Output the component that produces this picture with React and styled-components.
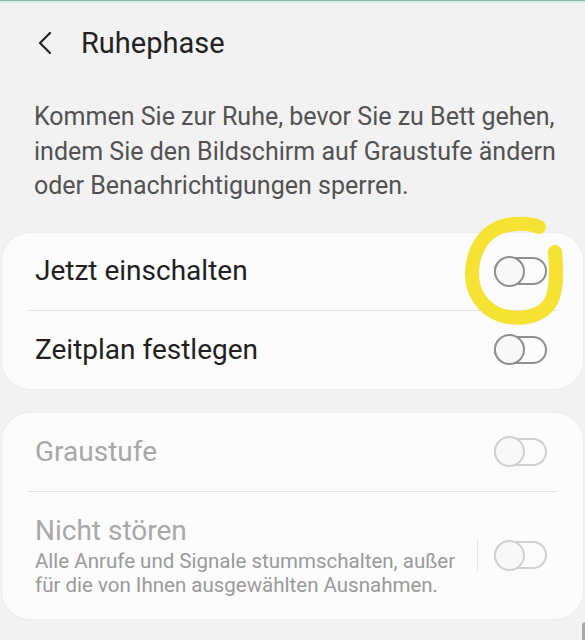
import React from 'react'
import styled, { createGlobalStyle } from 'styled-components'

const GlobalStyle = createGlobalStyle`
  html, body {
    margin: 0;
    padding: 0;
    background: #f2f2f2;
    font-family: Roboto, "Noto Sans", sans-serif;
  }
`

const Page = styled.div`
  position: relative;
  width: 585px;
  height: 640px;
  overflow: hidden;
  background: #f2f2f2;
  border-top: 1px solid #86bda4;
  box-sizing: border-box;
`

const TopGlow = styled.div`
  height: 2px;
  background: #d4efe3;
`

const Header = styled.header`
  display: flex;
  align-items: center;
  height: 80px;
  padding-left: 36px;
  box-sizing: border-box;
`

const BackButton = styled.button`
  display: flex;
  align-items: center;
  justify-content: center;
  width: 18px;
  height: 26px;
  padding: 0;
  margin-right: 27px;
  border: none;
  background: none;
`

const Title = styled.h1`
  margin: 0;
  font-size: 29px;
  font-weight: 400;
  color: #222;
`

const Description = styled.p`
  margin: 17px 0 0;
  padding: 0 28px 0 34px;
  font-size: 25px;
  line-height: 34.5px;
  color: #525252;
`

const Card = styled.section`
  margin: ${p => p.$top}px 2px 0;
  background: #fcfcfc;
  border-radius: 28px;
  box-shadow: 0 0 0 1px #ececec;
`

const Row = styled.div`
  display: flex;
  align-items: center;
  min-height: ${p => p.$height || 77}px;
  padding: 0 36px 0 33px;
  box-sizing: border-box;
`

const Divider = styled.div`
  height: 1px;
  margin: 0 26px;
  background: #e2e2e2;
`

const Texts = styled.div`
  flex: 1;
  display: flex;
  flex-direction: column;
`

const Label = styled.span`
  font-size: 28px;
  line-height: 34px;
  color: ${p => (p.$disabled ? '#a8a8a8' : '#1f1f1f')};
`

const Sub = styled.span`
  margin-top: 1px;
  font-size: 20.5px;
  line-height: 24px;
  color: #9a9a9a;
`

const VLine = styled.div`
  width: 1px;
  height: 32px;
  margin: 0 16px 0 6px;
  background: #e4e4e4;
`

const Toggle = styled.span`
  position: relative;
  display: inline-block;
  width: 53px;
  height: 28px;
  box-sizing: border-box;
  border: 2px solid ${p => (p.$disabled ? '#d0d0d0' : '#909090')};
  border-radius: 14px;
  flex: none;

  &::before {
    content: '';
    position: absolute;
    left: -2px;
    top: -3.5px;
    width: 31px;
    height: 31px;
    box-sizing: border-box;
    border-radius: 50%;
    border: 2px solid ${p => (p.$disabled ? '#d0d0d0' : '#909090')};
    background: #f8f8f8;
  }
`

const Marker = styled.svg`
  position: absolute;
  left: 0;
  top: 0;
  pointer-events: none;
`

const ScrollThumb = styled.div`
  position: absolute;
  right: -3px;
  top: 621px;
  width: 6px;
  height: 40px;
  border-radius: 3px;
  background: #a9a9a9;
`

export default function App() {
  return (
    <>
      <GlobalStyle />
      <Page>
        <TopGlow />
        <Header>
          <BackButton aria-label="Zurück">
            <svg width="16" height="24" viewBox="0 0 16 24">
              <path d="M13 2 L3 12 L13 22" fill="none" stroke="#222" strokeWidth="2.2" strokeLinecap="round" strokeLinejoin="round" />
            </svg>
          </BackButton>
          <Title>Ruhephase</Title>
        </Header>

        <Description>
          Kommen Sie zur Ruhe, bevor Sie zu Bett gehen, indem Sie den Bildschirm auf Graustufe ändern oder Benachrichtigungen sperren.
        </Description>

        <Card $top={29}>
          <Row>
            <Texts><Label>Jetzt einschalten</Label></Texts>
            <Toggle />
          </Row>
          <Divider />
          <Row $height={78}>
            <Texts><Label>Zeitplan festlegen</Label></Texts>
            <Toggle />
          </Row>
        </Card>

        <Card $top={24}>
          <Row $height={78}>
            <Texts><Label $disabled>Graustufe</Label></Texts>
            <Toggle $disabled />
          </Row>
          <Divider />
          <Row $height={127}>
            <Texts>
              <Label $disabled>Nicht stören</Label>
              <Sub>Alle Anrufe und Signale stummschalten, außer für die von Ihnen ausgewählten Ausnahmen.</Sub>
            </Texts>
            <VLine />
            <Toggle $disabled />
          </Row>
        </Card>

        <Marker width="585" height="640" viewBox="0 0 585 640">
          <path
            d="M539 226 C527 221 506 222 494 229 C479 238 472 256 472 273 C472 291 482 307 500 314 C516 319 536 318 548 305 C557 294 557 274 555 251"
            fill="none"
            stroke="#f6e232"
            strokeWidth="14"
            strokeLinecap="round"
            strokeLinejoin="round"
          />
        </Marker>
        <ScrollThumb />
      </Page>
    </>
  )
}
